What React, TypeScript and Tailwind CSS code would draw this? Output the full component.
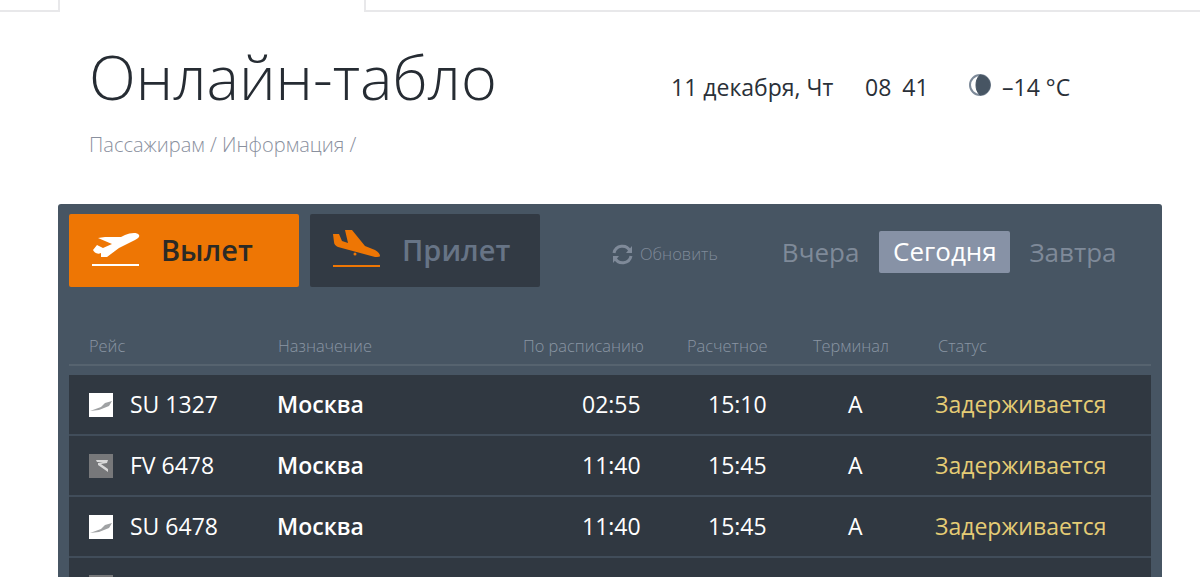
const flights = [
  { logo: 'su', code: 'SU 1327', city: 'Москва', plan: '02:55', est: '15:10' },
  { logo: 'fv', code: 'FV 6478', city: 'Москва', plan: '11:40', est: '15:45' },
  { logo: 'su', code: 'SU 6478', city: 'Москва', plan: '11:40', est: '15:45' },
]

function Departure() {
  return (
    <svg width="48" height="42" viewBox="0 0 48 42" className="shrink-0">
      <path d="M47 5C45 2 38 3 33 5L29 7 13 7 6 8 20 14 11 18 5 15 1 20C2 22 5 25 9 23L9 27 15 27 27 18 43 10C46 8 48 7 47 5z" fill="#fff" />
      <rect x="0" y="34" width="47" height="2" fill="#fff" />
    </svg>
  )
}

function Arrival() {
  return (
    <svg width="48" height="42" viewBox="0 0 48 42" className="shrink-0">
      <path d="M12 0L19 0 32 16 42 20Q47 23 47 26 47 27 42 27L5 17Q1 15 1 12L0 4 6 4 9 11 15 13z" fill="#ee7604" />
      <circle cx="22" cy="24" r="1.5" fill="#ee7604" />
      <rect x="0" y="35" width="47" height="2" fill="#ee7604" />
    </svg>
  )
}

function AirlineLogo({ kind }: { kind: string }) {
  if (kind === 'fv') {
    return (
      <svg width="24" height="24" viewBox="0 0 24 24" className="shrink-0">
        <rect width="24" height="24" fill="#77787a" />
        <path d="M7 6h12l-1 3-6 1 7 5v3l-10-7v-2l5-1H8z" fill="#d8d8d8" className="blur-[0.4px]" />
      </svg>
    )
  }
  return (
    <svg width="24" height="24" viewBox="0 0 24 24" className="shrink-0">
      <rect width="24" height="24" fill="#fff" />
      <path d="M1 18L12 14 16 10 23 8 20 13 10 17z" fill="#a0a2a4" className="blur-[0.6px]" />
    </svg>
  )
}

function Refresh() {
  return (
    <svg width="23" height="23" viewBox="0 0 23 23" fill="none" stroke="#7f8a99" strokeWidth="3" className="shrink-0">
      <path d="M3 10a8.5 8.5 0 0 1 16-2" />
      <path d="M20 13a8.5 8.5 0 0 1-16 2" />
      <path d="M21 3v7h-6" fill="#7f8a99" stroke="none" />
      <path d="M2 20v-7h6" fill="#7f8a99" stroke="none" />
    </svg>
  )
}

export default function App() {
  return (
    <div className="h-[577px] overflow-hidden bg-white font-['Open_Sans',sans-serif]">
      {/* Top tabs */}
      <div className="flex h-[12px]">
        <div className="w-[60px] border-r-2 border-b-2 border-[#e8e8ea]" />
        <div className="w-[304px]" />
        <div className="flex-1 border-l-2 border-b-2 border-[#e8e8ea]" />
      </div>

      {/* Heading */}
      <div className="flex h-[192px] pl-[89px]">
        <div className="w-[582px]">
          <h1 className="mt-[25px] text-[61.2px] leading-[80px] font-light text-[#262c33]">Онлайн-табло</h1>
          <p className="mt-[16px] text-[20px] leading-[24px] font-light text-[#8a909e]">Пассажирам / Информация /</p>
        </div>
        <div className="mt-[59px] flex h-[32px] items-center text-[23px] leading-[32px] text-[#2a3038]">
          <span className="w-[194px]">11 декабря, Чт</span>
          <div className="flex w-[102px] gap-[11px]">
            <span>08</span>
            <span>41</span>
          </div>
          <svg width="24" height="24" viewBox="0 0 24 24" className="mb-[5px] ml-[1px] shrink-0">
            <circle cx="12" cy="12" r="10" fill="#fff" stroke="#7d8a99" strokeWidth="2" />
            <path d="M12 2a10 10 0 0 1 0 20c-3-3-4-6-4-10s1-7 4-10z" fill="#475563" stroke="#475563" />
          </svg>
          <span className="ml-[10px]">–14 °C</span>
        </div>
      </div>

      {/* Board */}
      <div className="ml-[58px] h-[400px] w-[1104px] rounded-[3px] bg-[#475563] px-[11px] pt-[10px]">
        <div className="flex h-[73px] items-center">
          <div className="flex h-full w-[230px] items-center gap-[21px] rounded-[2px] bg-[#ee7604] pl-[23px]">
            <Departure />
            <span className="mb-[2px] text-[29px] font-semibold text-[#2b2a26]">Вылет</span>
          </div>
          <div className="ml-[11px] flex h-full w-[230px] items-center gap-[21px] rounded-[2px] bg-[#323a44] pl-[23px]">
            <Arrival />
            <span className="mb-[2px] text-[29px] font-semibold text-[#677486]">Прилет</span>
          </div>
          <div className="ml-[71px] mt-[8px] flex items-center gap-[6px] text-[16.5px] font-light text-[#7f8a99]">
            <Refresh />
            <span>Обновить</span>
          </div>
          <div className="ml-[50px] mt-[2px] flex items-center text-[26px] leading-[42px] text-[#7f8a99]">
            <span className="mr-[6px] px-[14px]">Вчера</span>
            <span className="h-[42px] w-[131px] rounded-[2px] bg-[#8792a6] text-center leading-[40px] text-white">Сегодня</span>
            <span className="pl-[19px]">Завтра</span>
          </div>
        </div>

        {/* Column headers */}
        <div className="mt-[44px] grid h-[35px] grid-cols-[209px_245px_164px_126px_125px_1fr] border-b-2 border-[#56636f] text-[16.4px] font-light leading-[30px] text-[#8a95a3]">
          <span className="pl-[20px]">Рейс</span>
          <span>Назначение</span>
          <span>По расписанию</span>
          <span>Расчетное</span>
          <span>Терминал</span>
          <span>Статус</span>
        </div>

        {/* Rows */}
        <div className="mt-[9px]">
          {flights.map((f) => (
            <div
              key={f.code}
              className="grid h-[61px] grid-cols-[208px_305px_126px_140px_87px_1fr] items-center border-b-2 border-[#414d5a] bg-[#303841] text-[23px] text-white"
            >
              <div className="flex items-center gap-[17px] pl-[20px]">
                <AirlineLogo kind={f.logo} />
                <span>{f.code}</span>
              </div>
              <span className="font-semibold">{f.city}</span>
              <span>{f.plan}</span>
              <span>{f.est}</span>
              <span>A</span>
              <span className="text-[#e5cc75]">Задерживается</span>
            </div>
          ))}
          <div className="h-[61px] bg-[#303841] pl-[20px] pt-[17px]">
            <AirlineLogo kind="fv" />
          </div>
        </div>
      </div>
    </div>
  )
}
